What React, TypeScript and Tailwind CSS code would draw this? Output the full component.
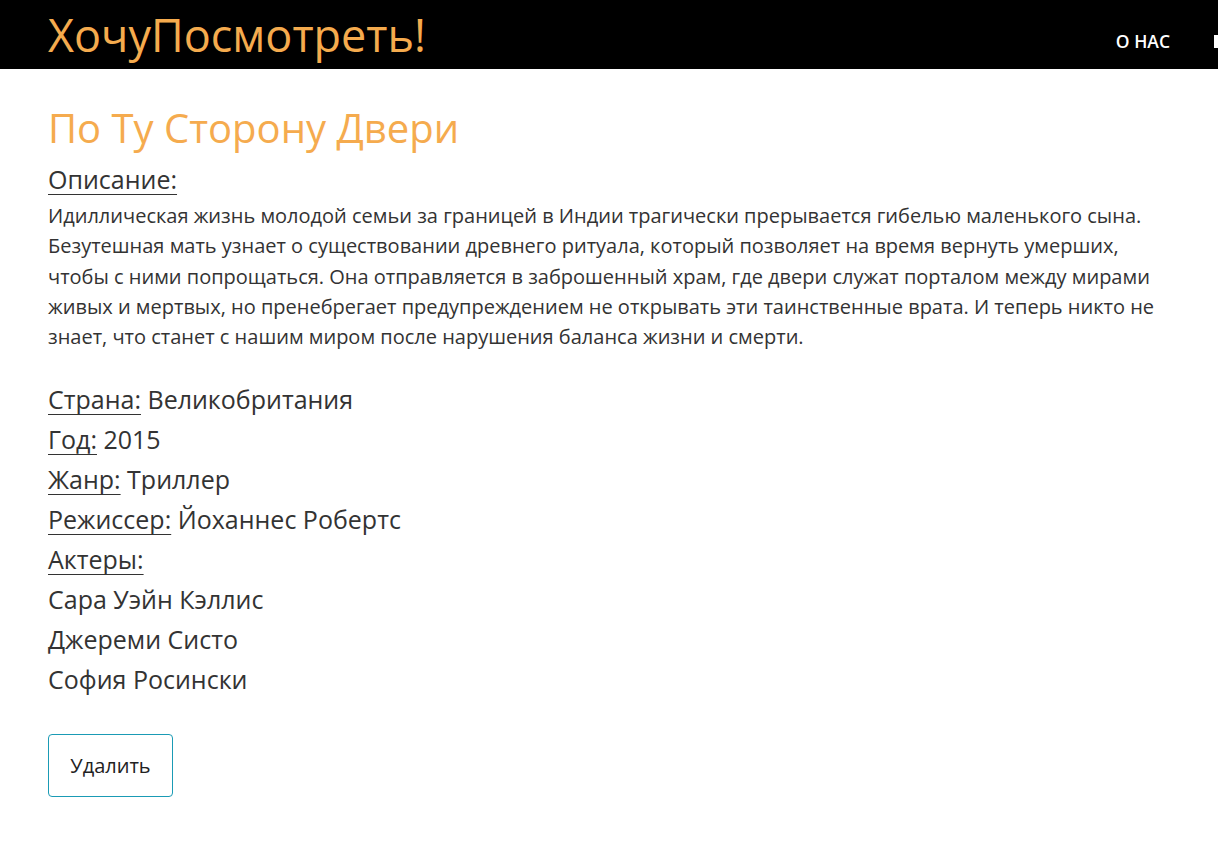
export default function App() {
  const font = { fontFamily: '"Open Sans", "Noto Sans", sans-serif' }
  return (
    <div className="min-h-[844px] bg-white text-[#333]" style={font}>
      <header className="flex h-[69px] items-center overflow-hidden bg-black pl-[48px]">
        <div className="text-[45px] leading-none text-[#f5ab4e]">ХочуПосмотреть!</div>
        <nav className="ml-auto mt-[13px] flex shrink-0 items-center text-[17.5px] font-semibold text-white">
          <a className="ml-[40px]">О НАС</a>
          <span className="ml-[44px] block h-[13px] w-[4px] bg-white" />
        </nav>
      </header>
      <main className="px-[48px] pt-[35px]">
        <h1 className="text-[40px] leading-[48px] text-[#f5ab4e]">По Ту Сторону Двери</h1>
        <h2 className="mt-[12px] text-[25px] leading-[30px] underline underline-offset-[5px] decoration-1">Описание:</h2>
        <p className="mt-[7px] text-[20px] leading-[30.3px]">
          Идиллическая жизнь молодой семьи за границей в Индии трагически прерывается гибелью маленького сына.
          Безутешная мать узнает о существовании древнего ритуала, который позволяет на время вернуть умерших,
          чтобы с ними попрощаться. Она отправляется в заброшенный храм, где двери служат порталом между мирами
          живых и мертвых, но пренебрегает предупреждением не открывать эти таинственные врата. И теперь никто не
          знает, что станет с нашим миром после нарушения баланса жизни и смерти.
        </p>
        <div className="mt-[27px] text-[25px] leading-[40px]">
          <div><span className="underline underline-offset-[5px] decoration-1">Страна:</span> Великобритания</div>
          <div><span className="underline underline-offset-[5px] decoration-1">Год:</span> 2015</div>
          <div><span className="underline underline-offset-[5px] decoration-1">Жанр:</span> Триллер</div>
          <div><span className="underline underline-offset-[5px] decoration-1">Режиссер:</span> Йоханнес Робертс</div>
          <div><span className="underline underline-offset-[5px] decoration-1">Актеры:</span></div>
          <div>Сара Уэйн Кэллис</div>
          <div>Джереми Систо</div>
          <div>София Росински</div>
        </div>
        <button className="mt-[35px] h-[63px] w-[125px] rounded-[4px] border border-[#1a9bb5] bg-white text-[20px] text-[#222]">
          Удалить
        </button>
      </main>
    </div>
  )
}
